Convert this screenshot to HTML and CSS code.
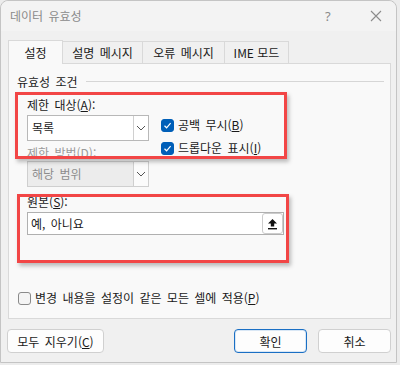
FILE: index.html
```html
<!DOCTYPE html>
<html lang="ko">
<head>
<meta charset="utf-8">
<link rel="stylesheet" href="styles.css">
</head>
<body>
<div class="window">
  <div class="titlebar">
    <span class="title">데이터 유효성</span>
    <span class="help">?</span>
    <svg class="close" width="12" height="12" viewBox="0 0 12 12"><path d="M1 1L11 11M11 1L1 11" stroke="#8c8c8c" stroke-width="1.1" fill="none"/></svg>
  </div>
  <div class="tabs">
    <div class="tab active">설정</div>
    <div class="tab">설명 메시지</div>
    <div class="tab">오류 메시지</div>
    <div class="tab">IME 모드</div>
  </div>
  <div class="panel">
    <div class="legend"><span>유효성 조건</span><div class="rule"></div></div>
    <div class="group">
      <div class="label lbl1">제한 대상(<u>A</u>):</div>
      <div class="row">
        <div class="select">
          <span class="val">목록</span>
          <span class="arrow"><svg width="10" height="6" viewBox="0 0 10 6"><path d="M1 1L5 5L9 1" stroke="#555" stroke-width="1" fill="none"/></svg></span>
        </div>
        <div class="checks">
          <div class="check"><span class="box on"><svg width="9" height="9" viewBox="0 0 9 9"><path d="M1.5 4.8L3.6 6.8L7.6 2.2" stroke="#fff" stroke-width="1.2" fill="none"/></svg></span>공백 무시(<u>B</u>)</div>
          <div class="check"><span class="box on"><svg width="9" height="9" viewBox="0 0 9 9"><path d="M1.5 4.8L3.6 6.8L7.6 2.2" stroke="#fff" stroke-width="1.2" fill="none"/></svg></span>드롭다운 표시(<u>I</u>)</div>
        </div>
      </div>
      <div class="label disabled lbl2">제한 방법(D):</div>
      <div class="select dis">
        <span class="val">해당 범위</span>
        <span class="arrow"><svg width="10" height="6" viewBox="0 0 10 6"><path d="M1 1L5 5L9 1" stroke="#555" stroke-width="1" fill="none"/></svg></span>
      </div>
      <div class="label lbl3">원본(<u>S</u>):</div>
      <div class="input">
        <span class="val">예, 아니요</span>
        <span class="upbtn"><svg width="11" height="12" viewBox="0 0 11 12"><path d="M5.5 1L1 5.5H3.8V8.5H7.2V5.5H10Z" fill="#111"/><rect x="1" y="10" width="9" height="1.4" fill="#111"/></svg></span>
      </div>
    </div>
    <div class="check apply"><span class="box"></span>변경 내용을 설정이 같은 모든 셀에 적용(<u>P</u>)</div>
    <div class="mark m1"></div>
    <div class="mark m2"></div>
  </div>
  <div class="buttons">
    <button class="btn clear">모두 지우기(<u>C</u>)</button>
    <div class="spacer"></div>
    <button class="btn ok">확인</button>
    <button class="btn">취소</button>
  </div>
</div>
</body>
</html>
```

FILE: styles.css
```css
* { box-sizing: border-box; }
html, body { margin: 0; padding: 0; }
body {
  width: 400px;
  height: 365px;
  background: #ececec;
  font-family: "Noto Sans CJK KR", "Noto Sans", sans-serif;
  font-size: 12px;
  line-height: 16px;
  word-spacing: 2px;
  color: #1a1a1a;
  overflow: hidden;
}
u { text-decoration: underline; text-underline-offset: 1px; }
.window {
  width: 397px;
  height: 363px;
  background: #f0f0f0;
  border: 1px solid #c4c4c4;
  border-radius: 8px 8px 0 0;
  position: relative;
}
.titlebar {
  height: 30px;
  background: #f3f3f3;
  border-radius: 8px 8px 0 0;
  display: flex;
  align-items: center;
  padding-left: 9px;
  color: #8a8a8a;
}
.title { flex: 1; }
.help { font-family: "Noto Sans", sans-serif; font-size: 13px; width: 10px; margin-right: 35px; color: #8a8a8a; }
.close { margin-right: 14px; }
.tabs {
  display: flex;
  margin-left: 7px;
  margin-top: 9px;
  height: 23px;
  align-items: flex-end;
}
.tab {
  height: 22px;
  padding: 0;
  white-space: nowrap;
  border: 1px solid #d9d9d9;
  border-bottom: none;
  border-left: none;
  background: #f0f0f0;
  display: flex;
  align-items: center;
  justify-content: center;
}
.tab.active {
  height: 24px;
  width: 55px;
  margin-bottom: -1px;
  background: #f9f9f9;
  border-left: 1px solid #d9d9d9;
  position: relative;
  z-index: 1;
}
.tab:nth-child(2) { width: 80px; }
.tab:nth-child(3) { width: 82px; }
.tab:nth-child(4) { width: 64px; word-spacing: 0; }
.panel {
  margin-left: 7px;
  width: 383px;
  height: 256px;
  background: #f9f9f9;
  border: 1px solid #d9d9d9;
  position: relative;
  padding-top: 10px;
}
.legend {
  display: flex;
  align-items: center;
  padding-left: 8px;
  padding-right: 6px;
}
.legend span { margin-right: 8px; }
.rule { flex: 1; height: 1px; background: #d6d6d6; margin-top: -2px; }
.group { padding-left: 18px; }
.label { height: 16px; }
.lbl1 { margin-top: 7px; }
.lbl2 { margin-top: 4px; }
.lbl3 { margin-top: 7px; }
.disabled { color: #9a9a9a; }
.row { display: flex; margin-top: 2px; height: 26px; }
.select {
  width: 122px;
  height: 26px;
  background: #fff;
  border: 1px solid #b8b8b8;
  display: flex;
  align-items: center;
}
.select .val { flex: 1; padding-left: 4px; }
.select .arrow {
  width: 15px;
  height: 100%;
  border-left: 1px solid #d0d0d0;
  display: flex;
  align-items: center;
  justify-content: center;
}
.select.dis { background: #ececec; border-color: #cfcfcf; color: #8c8c8c; }
.select.dis .arrow { background: #fbfbfb; border-left-color: #cfcfcf; }
.checks {
  margin-left: 12px;
  padding-top: 2px;
  display: flex;
  flex-direction: column;
  gap: 7px;
  height: 26px;
}
.check { display: flex; align-items: center; height: 16px; flex: none; }
.box {
  width: 13px;
  height: 13px;
  border-radius: 3px;
  border: 1px solid #8a8a8a;
  background: #f4f4f4;
  margin-right: 4px;
  display: flex;
  align-items: center;
  justify-content: center;
}
.box.on { background: #005fb8; border-color: #005fb8; }
.input {
  margin-top: 2px;
  width: 257px;
  height: 23px;
  background: #fff;
  border: 1px solid #b0b0b0;
  display: flex;
  align-items: center;
}
.input .val { flex: 1; padding-left: 3px; }
.upbtn {
  width: 21px;
  height: 21px;
  border: 1px solid #cccccc;
  border-radius: 3px;
  background: #fff;
  display: flex;
  align-items: center;
  justify-content: center;
}
.apply { margin-top: 55px; padding-left: 9px; }
.mark {
  position: absolute;
  border: 3px solid #f24646;
  box-shadow: 2px 3px 4px rgba(0,0,0,0.25);
}
.m1 { left: 6px; top: 28px; width: 272px; height: 67px; }
.m2 { left: 8px; top: 130px; width: 272px; height: 69px; }
.buttons {
  display: flex;
  padding: 10px 5px 0 6px;
  gap: 11px;
}
.spacer { flex: 1; }
.btn {
  font-family: "Noto Sans CJK KR", "Noto Sans", sans-serif;
  font-size: 12px;
  word-spacing: 2px;
  height: 24px;
  width: 73px;
  background: #fdfdfd;
  border: 1px solid #d0d0d0;
  border-radius: 4px;
  color: #1a1a1a;
  padding: 0;
}
.btn.clear { width: 97px; }
.btn.ok { border: 1px solid #1a6fc4; box-shadow: inset 0 0 0 1px #d9e7f5; }
```
